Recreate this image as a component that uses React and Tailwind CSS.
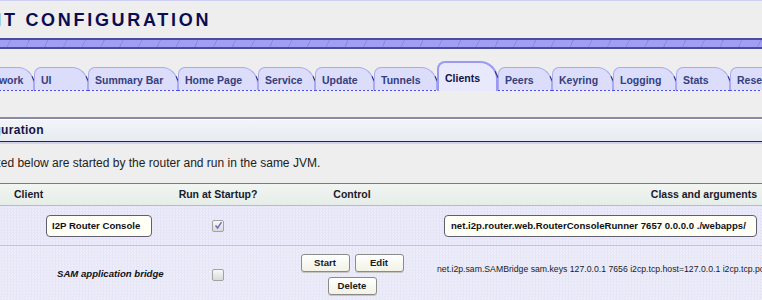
import React from "react";

const tabs = [
  { label: "Network", size: "w-[59px] -ml-[25px]" },
  { label: "UI", size: "w-[54px]" },
  { label: "Summary Bar", size: "w-[90px]" },
  { label: "Home Page", size: "w-[80px]" },
  { label: "Service", size: "w-[57px]" },
  { label: "Update", size: "w-[59px]" },
  { label: "Tunnels", size: "w-[63px]" },
  { label: "Clients", size: "w-[61px]", active: true },
  { label: "Peers", size: "w-[54px]" },
  { label: "Keyring", size: "w-[61px]" },
  { label: "Logging", size: "w-[63px]" },
  { label: "Stats", size: "w-[54px]" },
  { label: "Reseed", size: "w-[70px]" },
];

const Slash = () => (
  <span className="absolute right-[-1px] top-[8px] h-[7px] w-px -rotate-[25deg] bg-[#2c2c6c]" />
);

const Tab = ({ label, size, active }) => {
  if (active) {
    return (
      <div
        className={`relative h-[30px] shrink-0 ${size} rounded-tl-[8px] rounded-tr-[18px] border-2 border-b-0 border-[#9a9af0] bg-[#e9e9fd] pl-[6px] pt-[8.5px] text-[10.5px] font-bold leading-[13px] text-[#12124a]`}
      >
        {label}
        <Slash />
      </div>
    );
  }
  return (
    <div className={`flex h-[24px] shrink-0 flex-col ${size}`}>
      <div className="relative h-[23px] whitespace-nowrap rounded-tl-[7px] rounded-tr-[16px] border border-b-0 border-[#aaaaf2] bg-[#dcdcfb] pl-[6px] pt-[5.5px] text-[10.5px] font-bold leading-[13px] text-[#34407c]">
        {label}
        <Slash />
      </div>
      <div className="h-px bg-[image:repeating-linear-gradient(90deg,#4c4cf0_0_2px,transparent_2px_4px)]" />
    </div>
  );
};

const Checkbox = ({ checked }) => (
  <span className="flex h-[12px] w-[12px] items-center justify-center rounded-[2px] border border-[#a2a2a2] bg-gradient-to-b from-[#f8f8f8] to-[#dadada]">
    {checked && (
      <svg width="9" height="9" viewBox="0 0 9 9">
        <path d="M1.5 4.5 L3.6 7 L7.5 1.2" fill="none" stroke="#6a6ac4" strokeWidth="1.4" />
      </svg>
    )}
  </span>
);

const Button = ({ children }) => (
  <button className="h-[18px] w-[49px] rounded-[3px] border border-[#8a8a8a] bg-gradient-to-b from-white to-[#f2f2e6] text-[9.6px] font-bold leading-[16px] text-[#1a1a1a] shadow-[0_1px_0_#c6c6c6]">
    {children}
  </button>
);

export default function App() {
  return (
    <div className="h-[300px] w-[762px] overflow-hidden bg-[#eeeeee] font-['Liberation_Sans',Arial,sans-serif]">
      <div className="h-px bg-[#cfcff6]" />

      {/* page title */}
      <div className="h-[37px] whitespace-nowrap pt-[9.5px]">
        <h1 className="-ml-[63.5px] text-[18px] font-bold leading-[18px] tracking-[2.7px] text-[#0c0c52]">
          CLIENT CONFIGURATION
        </h1>
      </div>

      <div className="h-[11px] border-y-2 border-[#4c4c9c] bg-[#a29ef4] bg-[image:repeating-linear-gradient(115deg,transparent_0_9px,#8e8ae8_9px_10px,transparent_10px_17px)]" />

      {/* config tabs */}
      <div className="mt-[12px] flex h-[30px] items-end whitespace-nowrap">
        {tabs.map((t) => (
          <Tab key={t.label} {...t} />
        ))}
      </div>

      {/* section header */}
      <div className="mt-[26px] h-[25px] whitespace-nowrap border-t-2 border-b border-t-[#8a8aa6] border-b-[#23234f] bg-gradient-to-b from-[#f3f4f9] to-[#e6ecef] shadow-[inset_0_1px_0_#ffffff,0_2px_0_#d2d2ee]">
        <h3 className="-ml-[77.5px] text-[12px] font-bold leading-[22px] tracking-[0.3px] text-[#141446]">
          Client Configuration
        </h3>
      </div>

      <p className="-ml-[104px] mt-[13px] whitespace-nowrap text-[12px] leading-[16px] text-[#222222]">
        The Java clients listed below are started by the router and run in the same JVM.
      </p>

      {/* clients table */}
      <div className="mt-[12px] border-t border-[#76769a]">
        <div className="grid h-[22px] grid-cols-[176px_84px_184px_1fr] items-center border-b border-[#b6b6e6] bg-gradient-to-b from-[#f2f6f2] to-[#e6ece8] text-[10.5px] font-bold text-[#1a1a2a]">
          <div className="pl-[14px]">Client</div>
          <div className="text-center">Run at Startup?</div>
          <div className="text-center">Control</div>
          <div className="pr-[5px] text-right">Class and arguments</div>
        </div>

        <div className="grid h-[40px] grid-cols-[176px_84px_184px_1fr] items-center border-b border-[#c2c2f0] bg-[#e8e8f8] bg-[image:repeating-conic-gradient(#e4e4f6_0_25%,#ececfa_0_50%)] bg-[length:3px_3px]">
          <div className="pl-[46px]">
            <div className="h-[22px] w-[106px] rounded-[4px] border border-[#5e5e70] bg-[#fffff6] pl-[5px] text-[9.6px] font-bold leading-[20px] text-[#111118]">
              I2P Router Console
            </div>
          </div>
          <div className="flex justify-center">
            <Checkbox checked />
          </div>
          <div />
          <div>
            <div className="h-[22px] w-[313px] whitespace-nowrap rounded-[4px] border border-[#5e5e70] bg-[#fffff6] pl-[6px] text-[9.6px] font-bold leading-[20px] text-[#111118]">
              net.i2p.router.web.RouterConsoleRunner 7657 0.0.0.0 ./webapps/
            </div>
          </div>
        </div>

        <div className="grid grid-cols-[176px_84px_184px_1fr] items-center bg-[#eaeafa] bg-[image:repeating-conic-gradient(#e6e6f7_0_25%,#eeeefb_0_50%)] bg-[length:3px_3px] pb-[6px] pt-[8px]">
          <div className="pl-[57px] text-[9.6px] font-bold italic text-[#111118]">
            SAM application bridge
          </div>
          <div className="flex justify-center">
            <Checkbox />
          </div>
          <div className="flex flex-col items-center gap-[5px]">
            <div className="flex gap-[5px]">
              <Button>Start</Button>
              <Button>Edit</Button>
            </div>
            <Button>Delete</Button>
          </div>
          <div className="-ml-[7px] whitespace-nowrap pb-[9px] text-[8.7px] text-[#1a1a1a]">
            net.i2p.sam.SAMBridge sam.keys 127.0.0.1 7656 i2cp.tcp.host=127.0.0.1 i2cp.tcp.port=7654
          </div>
        </div>
      </div>
    </div>
  );
}
